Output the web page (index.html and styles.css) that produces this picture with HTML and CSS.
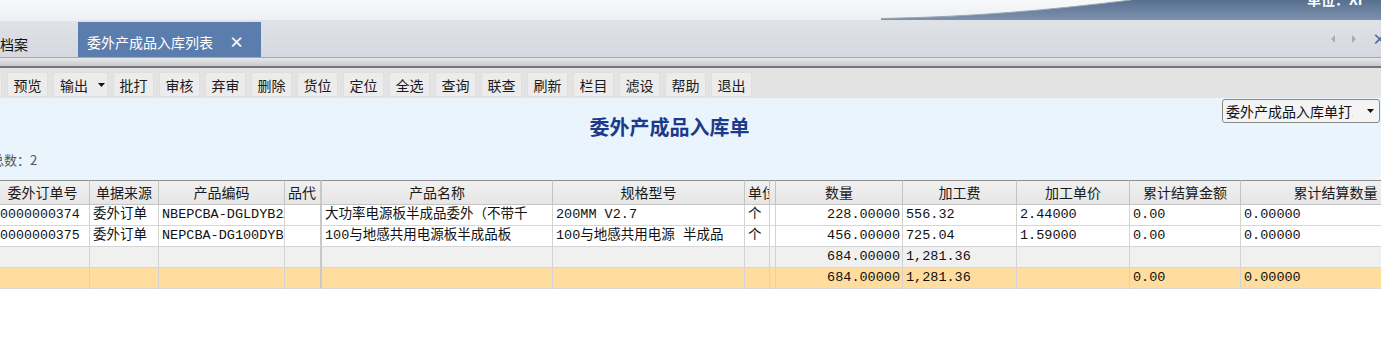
FILE: index.html
```html
<!DOCTYPE html>
<html>
<head>
<meta charset="utf-8">
<title>委外产成品入库列表</title>
<link rel="stylesheet" href="styles.css">
</head>
<body>

<div class="top">
	<svg class="swoosh" width="500" height="20" viewBox="0 0 500 20">
		<defs>
			<linearGradient id="sky" x1="0" y1="0" x2="0" y2="1">
				<stop offset="0" stop-color="#576f90"/>
				<stop offset="1" stop-color="#7e92ae"/>
			</linearGradient>
		</defs>
		<path d="M0,20 L0,18.5 C90,17 170,10 250,0 L500,0 L500,20 Z" fill="url(#sky)"/>
		<path d="M0,18.5 C90,17 170,10 250,0" fill="none" stroke="#9aa6b4" stroke-width="1"/>
		<text x="426" y="5" fill="#fff" font-size="14" font-weight="bold" font-family="Noto Sans CJK SC, sans-serif">单位：XI</text>
	</svg>
</div>

<div class="tabs">
	<div class="tab tab-prev">档案</div>
	<div class="tab tab-on">委外产成品入库列表<span class="tab-x">×</span></div>
	<div class="tab-nav">
		<svg width="6" height="8" viewBox="0 0 6 8"><path d="M5,0 L1,4 L5,8 Z" fill="#a9adb3"/></svg>
		<svg width="6" height="8" viewBox="0 0 6 8"><path d="M1,0 L5,4 L1,8 Z" fill="#a9adb3"/></svg>
		<span class="nav-x">×</span>
	</div>
</div>

<div class="rule"></div>

<div class="toolbar">
	<span class="btn stub"></span>
	<span class="btn">预览</span>
	<span class="btn drop">输出<svg width="7" height="4" viewBox="0 0 7 4"><path d="M0,0 L7,0 L3.5,4 Z" fill="#111"/></svg></span>
	<span class="btn">批打</span>
	<span class="btn">审核</span>
	<span class="btn">弃审</span>
	<span class="btn">删除</span>
	<span class="btn">货位</span>
	<span class="btn">定位</span>
	<span class="btn">全选</span>
	<span class="btn">查询</span>
	<span class="btn">联查</span>
	<span class="btn">刷新</span>
	<span class="btn">栏目</span>
	<span class="btn">滤设</span>
	<span class="btn">帮助</span>
	<span class="btn">退出</span>
</div>

<div class="panel">
	<div class="panel-head">
		<span></span>
		<h1 class="title">委外产成品入库单</h1>
		<div class="select">
			<span class="select-text">委外产成品入库单打印</span>
			<svg width="7" height="4" viewBox="0 0 7 4"><path d="M0,0 L7,0 L3.5,4 Z" fill="#111"/></svg>
		</div>
	</div>
	<div class="count">总数：2</div>
</div>

<div class="grid-wrap">
<table class="grid">
	<colgroup>
		<col style="width:94px"><col style="width:69px"><col style="width:126px"><col style="width:37px">
		<col style="width:231px"><col style="width:192px"><col style="width:25px"><col style="width:6px">
		<col style="width:127px"><col style="width:114px"><col style="width:113px"><col style="width:111px">
		<col style="width:190px">
	</colgroup>
	<thead>
		<tr>
			<th>委外订单号</th><th>单据来源</th><th>产品编码</th><th class="left dbl">品代</th>
			<th>产品名称</th><th>规格型号</th><th class="left">单位</th><th></th>
			<th>数量</th><th>加工费</th><th>加工单价</th><th>累计结算金额</th><th>累计结算数量</th>
		</tr>
	</thead>
	<tbody>
		<tr>
			<td class="first">0000000374</td><td>委外订单</td><td>NBEPCBA-DGLDYB2A</td><td class="dbl"></td>
			<td>大功率电源板半成品委外（不带千</td><td>200MM V2.7</td><td>个</td><td></td>
			<td class="num">228.00000</td><td>556.32</td><td>2.44000</td><td>0.00</td><td>0.00000</td>
		</tr>
		<tr>
			<td class="first">0000000375</td><td>委外订单</td><td>NEPCBA-DG100DYB</td><td class="dbl"></td>
			<td>100与地感共用电源板半成品板</td><td>100与地感共用电源 半成品</td><td>个</td><td></td>
			<td class="num">456.00000</td><td>725.04</td><td>1.59000</td><td>0.00</td><td>0.00000</td>
		</tr>
		<tr class="sum">
			<td></td><td></td><td></td><td class="dbl"></td><td></td><td></td><td></td><td></td>
			<td class="num">684.00000</td><td>1,281.36</td><td></td><td></td><td></td>
		</tr>
		<tr class="total">
			<td></td><td></td><td></td><td class="dbl"></td><td></td><td></td><td></td><td></td>
			<td class="num">684.00000</td><td>1,281.36</td><td></td><td>0.00</td><td>0.00000</td>
		</tr>
	</tbody>
</table>
</div>

</body>
</html>
```

FILE: styles.css
```css
html, body {
	margin: 0;
	overflow: hidden;
	background: #fff;
}

body {
	font-family: "Noto Sans CJK SC", sans-serif;
	font-size: 14px;
	color: #111;
}

/* oberer streifen mit dem blauen bogen rechts */
.top {
	height: 20px;
	display: flex;
	justify-content: flex-end;
	background: linear-gradient(#f7f8fa, #eef0f3);
}

.swoosh {
	display: block;
}

.tabs {
	height: 37px;
	display: flex;
	align-items: flex-end;
	background: linear-gradient(#dfe3e8, #d5d9df);
}

.tab {
	box-sizing: border-box;
	display: flex;
	align-items: center;
	line-height: 26px;
}

.tab-prev {
	width: 78px;
	height: 37px;
	padding-top: 10px;
	border-top: 1px solid #eef3fa;
	color: #111;
}

.tab-on {
	width: 183px;
	height: 35px;
	padding: 5px 0 0 9px;
	background: #5b7dad;
	color: #fff;
}

.tab-x {
	margin-left: 16px;
	font-weight: bold;
	font-size: 15px;
}

.tab-nav {
	margin-left: auto;
	align-self: center;
	display: flex;
	align-items: center;
	gap: 15px;
	margin-right: -6px;
}

.tab-nav svg {
	display: block;
}

.nav-x {
	color: #4a6b9c;
	font-weight: bold;
	font-size: 15px;
	line-height: 16px;
}

.rule {
	height: 8px;
	border-top: 1px solid #a3a7ac;
	border-bottom: 2px solid #73777d;
	background: linear-gradient(#e6e8ea, #c7c9cc);
}

.toolbar {
	height: 30px;
	box-sizing: border-box;
	padding: 4px 0 1px 0;
	display: flex;
	gap: 5px;
	background: #e3e3e3;
}

.btn {
	box-sizing: border-box;
	width: 41px;
	height: 25px;
	flex: none;
	display: flex;
	align-items: center;
	justify-content: center;
	background: #ececec;
	border: 1px solid #dfdfdf;
	border-radius: 2px;
	color: #1a1a1a;
}

.stub {
	margin-left: -39px;
}

.drop {
	width: 55px;
	gap: 10px;
	padding-left: 4px;
}

.panel {
	height: 82px;
	box-sizing: border-box;
	background: #eaf4fd;
}

.panel-head {
	display: grid;
	grid-template-columns: 1fr auto 1fr;
	align-items: start;
}

.title {
	margin: 17px 42px 0 0;
	font-size: 20px;
	line-height: 24px;
	font-weight: bold;
	color: #1c3a8a;
}

.select {
	justify-self: end;
	box-sizing: border-box;
	width: 158px;
	height: 24px;
	margin: 1px 1px 0 0;
	padding: 0 5px 0 3px;
	display: flex;
	align-items: center;
	justify-content: space-between;
	background: #f4f4f4;
	border: 1px solid #8a8a8a;
	border-radius: 3px;
	font-size: 14px;
	color: #111;
}

.select-text {
	width: 127px;
	overflow: hidden;
	white-space: nowrap;
}

.count {
	margin: 13px 0 0 -9px;
	font-size: 13px;
	line-height: 16px;
	color: #555;
}

.grid-wrap {
	overflow: hidden;
}

.grid {
	margin-left: -4px;
	table-layout: fixed;
	width: 1435px;
	border-collapse: separate;
	border-spacing: 0;
}

.grid th {
	height: 23px;
	padding: 0;
	border-top: 1px solid #8f8f8f;
	border-right: 1px solid #c4c4c4;
	border-bottom: 1px solid #c4c4c4;
	background: linear-gradient(#f0f0f0, #e6e6e6);
	font-weight: normal;
	font-size: 14px;
	line-height: 23px;
	color: #1a1a1a;
	white-space: nowrap;
	overflow: hidden;
}

.grid th.left {
	text-align: left;
	padding-left: 3px;
}

.grid td {
	height: 20px;
	padding: 0 3px;
	border-right: 1px solid #d3d3d3;
	border-bottom: 1px solid #d6d6d6;
	font-family: "Liberation Mono", "Noto Sans CJK SC", monospace;
	font-size: 13.5px;
	line-height: 20px;
	white-space: nowrap;
	overflow: hidden;
	background: #fff;
}

.grid td.first {
	padding-left: 4px;
	font-size: 13.3px;
}

.grid td.num {
	text-align: right;
	padding-right: 2px;
}

.grid .dbl {
	border-right: 2px solid #c8c8c8;
}

.grid tr.sum td {
	background: #f0f0f0;
}

.grid tr.total td {
	background: #fedd9f;
	border-bottom-color: #d9d9d9;
}
```
